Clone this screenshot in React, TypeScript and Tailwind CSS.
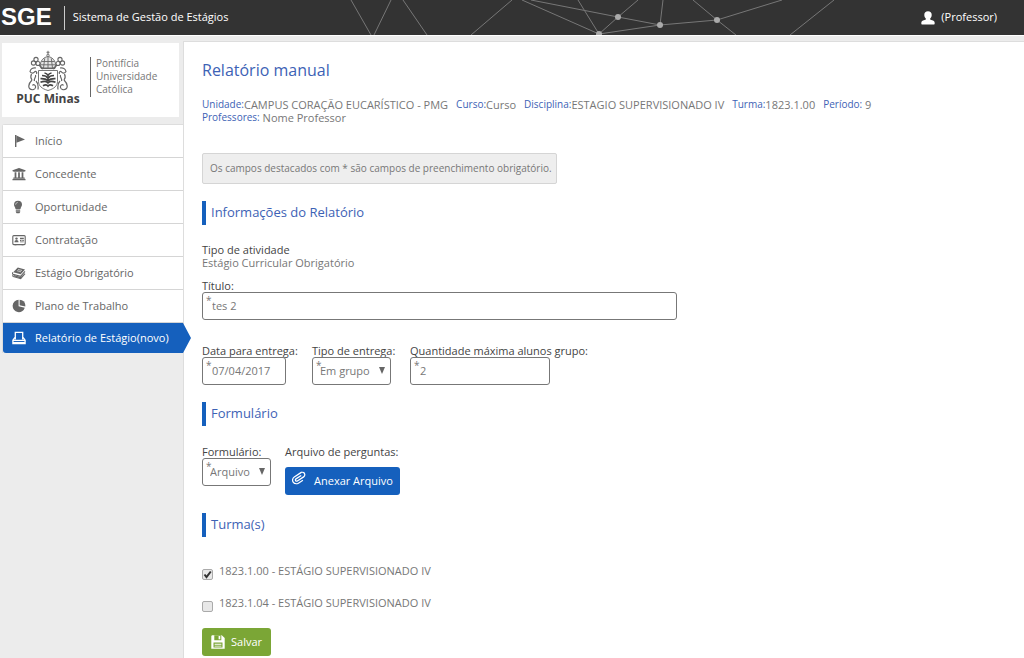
import React, { useState } from 'react';
import { FaUniversity } from 'react-icons/fa';
import { ImAttachment } from 'react-icons/im';

const FlagIcon = () => (
  <svg viewBox="0 0 14 14" className="h-3.5 w-3.5" fill="currentColor">
    <path d="M3 1h1.4v12H3z" />
    <path d="M4.4 1.4 13 5.6 4.4 8.800z" />
  </svg>
);

const BulbIcon = () => (
  <svg viewBox="0 0 14 14" className="h-3.5 w-3.5" fill="currentColor">
    <path d="M6 .8a4 4 0 0 1 4 4c0 1.700-1.300 2.400-1.500 4.200h-5C3.300 7.200 2 6.500 2 4.800a4 4 0 0 1 4-4z" />
    <path d="M3.800 9.600h4.400v1.100H3.800zM3.800 11.200h4.400v.900L7.400 13.200H4.600l-.800-1.100z" />
    <path d="M3.600 4.700C3.700 3.400 4.500 2.600 5.700 2.500" fill="none" stroke="#fff" strokeWidth=".6" />
  </svg>
);

const CardIcon = () => (
  <svg viewBox="0 0 14 14" className="h-3.5 w-3.5" fill="currentColor">
    <rect x=".8" y="2.600" width="12.400" height="9" rx="1" fill="none" stroke="currentColor" strokeWidth="1.100" />
    <circle cx="4.500" cy="5.600" r="1.200" />
    <path d="M2.500 9.200c0-1.300.8-2.200 2-2.200s2 .9 2 2.200z" />
    <path d="M8 4.800h3.800v1.500H8zM8 7h1.500v1H8zM10.300 7h1.500v1h-1.500zM8 8.600h3.800v.7H8zM2.600 11h1.800v1.200H2.600zM9.600 11h1.800v1.200H9.600z" />
  </svg>
);

const BookIcon = () => (
  <svg viewBox="0 0 14 14" className="h-3.5 w-3.5" fill="currentColor">
    <path d="M5.800 1.500 13 3.400 8.700 8.200 1.200 6.300z" />
    <path d="M1 6.400c-.700.700-.600 1.500 0 1.900l7.600 2.100L13 5.400M1.200 8.500c-.6.700-.5 1.600.1 2l7.400 2.200 4.300-5" fill="none" stroke="currentColor" strokeWidth="1.100" />
    <path d="m6 3.400 4 1.100M5 4.700l4 1.100" stroke="#fff" strokeWidth=".6" />
    <path d="M1.600 10.300 8.700 12.500l3.900-4.600-3.900 3L2 9z" />
  </svg>
);

const PieIcon = () => (
  <svg viewBox="0 0 14 14" className="h-3.5 w-3.5" fill="currentColor">
    <path d="M6.600.8V7.300l6.200 1.400A6.200 6.200 0 1 1 6.600.8z" />
    <path d="M7.600.7A6 6 0 0 1 13.300 6v1.500L7.600 6.300z" />
  </svg>
);

const ReportIcon = () => (
  <svg viewBox="0 0 14 14" className="h-3.5 w-3.5" fill="none" stroke="currentColor" strokeWidth="1.300">
    <path d="M3.300 8.500V1.300h7.400v7.200" />
    <path d="M3 6.500.9 9.200v3.500h12.200V9.200L11 6.500M1 9.300h12" />
    <path d="M1 11.600h12" />
  </svg>
);

const UserIcon = () => (
  <svg viewBox="0 0 14 14" className="h-3.5 w-3.5" fill="currentColor">
    <path d="M7 .3c2.300 0 3.700 1.300 3.700 3.500 0 1.700-.6 2.900-1.500 3.700v1c.4.500 1.700.7 2.800 1.100 1.200.5 1.700 1.200 1.700 2.700 0 .8-.3 1.200-1.100 1.200H1.400c-.8 0-1.100-.4-1.100-1.200 0-1.500.5-2.200 1.700-2.700 1.100-.4 2.400-.6 2.800-1.100v-1C3.900 6.700 3.300 5.500 3.300 3.800 3.300 1.600 4.700.3 7 .3z" />
  </svg>
);

const SaveIcon = () => (
  <svg viewBox="0 0 14 14" className="h-3.5 w-3.5">
    <path d="M1 .3h9.800L13.700 3v10.700H.3V1z" fill="#fff" />
    <path d="M3.300.3h7v4.900h-7zM2.500 7.600h9v5h-9z" fill="#7ba636" />
    <path d="M7.600 1h1.700v3.300H7.600z" fill="#fff" />
    <path d="M3.600 8.700h6.800v1H3.600zM3.600 10.700h6.800v.9H3.600z" fill="#fff" />
  </svg>
);

const Crest = () => (
  <svg viewBox="0 0 42 42" className="h-[42px] w-[42px]" fill="none" stroke="#666" strokeWidth=".9">
    <path d="M21 .8v3.800M19.500 2.300h3" />
    <circle cx="21" cy="5.300" r="1.200" />
    <path d="M14 18.500c-2-5.500 1-11 7-12 6 1 9 6.500 7 12z" fill="#e4e4e4" />
    <path d="M14.500 11.500h13M13.700 14.800h14.600M21 7v11M17.700 8.500 16.500 18M24.300 8.500 25.500 18" />
    <path d="M14 18.300h14" strokeWidth="1.600" />
    <g fill="#fff" strokeWidth="1.100">
      <circle cx="6.500" cy="13" r="2.100" /><circle cx="9" cy="9.500" r="2.100" /><circle cx="11" cy="13.500" r="2" />
      <circle cx="35.500" cy="13" r="2.100" /><circle cx="33" cy="9.500" r="2.100" /><circle cx="31" cy="13.500" r="2" />
    </g>
    <path d="m12 15 4 4M30 15l-4 4" strokeWidth="1.500" />
    <path d="M11.500 20.500h19v11c0 4-3 7.200-9.500 9-6.500-1.800-9.500-5-9.500-9z" fill="#fff" />
    <g stroke="#444" strokeWidth="1.700">
      <path d="M15 25.500c3 0 4.800.8 6 2.800 1.200-2 3-2.800 6-2.800M13.500 28.700c3.300-.2 5.800.5 7.500 2 1.700-1.500 4.200-2.200 7.500-2M13.500 32.300c3-1.200 6-1 7.500.5 1.500-1.500 4.500-1.700 7.500-.5M16 35.800c2-1.200 4-1.200 5 .2 1-1.400 3-1.400 5-.2M17.500 23c1.800.2 2.800 1 3.500 2.400.7-1.400 1.700-2.200 3.500-2.400" />
    </g>
    <g strokeWidth="1.200">
      <path d="M9 18c-3-.5-5.500 1-6 3.500 1 2 3.500 2 4.500.5s3 0 2 2M4.500 24c-1 2-1 4 .5 6M8.500 25c1 2-2 3.500-1 6M33 18c3-.5 5.500 1 6 3.500-1 2-3.500 2-4.500.5s-3 0-2 2M37.500 24c1 2 1 4-.5 6M33.500 25c-1 2 2 3.500 1 6" />
      <path d="M5 30c-3 3-4 6-2.500 8.500 2 2 5.500 1.500 6-1s-2-3.500-3-2M9 31c2 2 2.500 5 2 8.500M37 30c3 3 4 6 2.500 8.500-2 2-5.500 1.500-6-1s2-3.500 3-2M33 31c-2 2-2.500 5-2 8.500" />
    </g>
  </svg>
);

const menu = [
  { label: 'Início', icon: <FlagIcon /> },
  { label: 'Concedente', icon: <FaUniversity className="h-3.5 w-3.5" /> },
  { label: 'Oportunidade', icon: <BulbIcon /> },
  { label: 'Contratação', icon: <CardIcon /> },
  { label: 'Estágio Obrigatório', icon: <BookIcon /> },
  { label: 'Plano de Trabalho', icon: <PieIcon /> },
];

const Network = () => (
  <svg viewBox="0 0 500 35" className="absolute left-[340px] top-0 h-[35px] w-[500px]" fill="none" stroke="#777" strokeWidth="1">
    <path d="M11 0 31 35M51 0 34 35M63 0 87 35M172 0 131 35M182 0 259 34M191 0 278 17 320 25 377 20 442 0M238 0l21 34M298 0l-20 17-19 17 61-9L323 0M353 0l24 20 19 15M494 0 450 35" />
    <g fill="#aaa" stroke="none">
      <circle cx="278" cy="17" r="3" /><circle cx="320" cy="25" r="3" /><circle cx="377" cy="20" r="3" /><circle cx="259" cy="34" r="3" />
    </g>
  </svg>
);

const Star = () => <span aria-hidden="true" className="pointer-events-none absolute left-1 top-0.5 text-[10px] leading-3 text-[#777]">*</span>;

const control = 'block h-7 w-full appearance-none rounded-[3px] border border-[#777] bg-white text-[11px] text-[#777] outline-none focus:border-[#1560bd]';

function TextField({ id, label, value, width }: { id: string; label: string; value: string; width: string }) {
  return (
    <div className={width}>
      <label htmlFor={id} className="block whitespace-nowrap leading-[13px] text-[#444]">{label}</label>
      <div className="relative">
        <Star />
        <input id={id} type="text" defaultValue={value} className={control + ' px-[9px] pb-0.5'} />
      </div>
    </div>
  );
}

function SelectField({ id, label, options, width }: { id: string; label: string; options: string[]; width: string }) {
  return (
    <div className={width}>
      <label htmlFor={id} className="block whitespace-nowrap leading-[13px] text-[#444]">{label}</label>
      <div className="relative">
        <Star />
        <select id={id} className={control + ' pl-[7px] pr-4'}>
          {options.map((o) => <option key={o}>{o}</option>)}
        </select>
        <svg viewBox="0 0 6 7" className="pointer-events-none absolute right-1.5 top-2.5 h-[7px] w-1.5" fill="#666"><path d="M0 0h6L3 7z" /></svg>
      </div>
    </div>
  );
}

const Section = ({ children }: { children: React.ReactNode }) => (
  <h2 className="flex h-6 items-center border-l-4 border-[#1560bd] pl-[5px] text-[13px] text-[#3d62b5]">{children}</h2>
);

function Turma({ id, label, initial }: { id: string; label: string; initial: boolean }) {
  const [on, setOn] = useState(initial);
  return (
    <div className="flex h-4 items-start gap-[6px]">
      <span className="relative mt-1.5 h-[11px] w-[11px]">
        <input id={id} type="checkbox" checked={on} onChange={() => setOn(!on)} className="block h-[11px] w-[11px] appearance-none rounded-[2px] border border-[#aaa] bg-[#e8e8e8]" />
        {on && (
          <svg viewBox="0 0 11 11" className="pointer-events-none absolute left-0 top-0 h-[11px] w-[11px]" fill="none" stroke="#333" strokeWidth="2">
            <path d="m2.500 5.500 2 2.700L8.800 2.500" />
          </svg>
        )}
      </span>
      <label htmlFor={id} className="leading-4 text-[#777]">{label}</label>
    </div>
  );
}

const Info = ({ label, value }: { label: string; value: string }) => (
  <div className="flex whitespace-nowrap">
    <dt className="text-[10px] text-[#3d62b5]">{label}</dt>
    <dd className="whitespace-pre text-[#777]">{value}</dd>
  </div>
);

export default function App() {
  return (
    <div className="flex min-h-screen flex-col bg-[#ececec] font-['Open_Sans','Noto_Sans',sans-serif] text-[11px]">
      <header className="relative flex h-9 shrink-0 items-center overflow-hidden border-b border-white bg-[#333] text-white">
        <Network />
        <span className="pb-0.5 pl-px font-['Liberation_Sans',sans-serif] text-[24px] font-bold leading-8">SGE</span>
        <span className="ml-3 h-6 w-px bg-[#ccc]" />
        <span className="ml-2 font-medium">Sistema de Gestão de Estágios</span>
        <a href="#perfil" className="relative ml-auto mr-[27px] flex items-center gap-1.5 font-medium"><UserIcon />(Professor)</a>
      </header>
      <div className="flex flex-1">
        <aside className="w-[183px] shrink-0 pt-[7px]">
          <div className="ml-0.5 mr-1 flex h-[74px] bg-white">
            <div className="flex w-[88px] flex-col items-center pl-1 pt-[7px]">
              <Crest />
              <span className="text-xs font-bold leading-[14px] text-[#444]">PUC Minas</span>
            </div>
            <div className="mt-3.5 h-10 border-l border-[#666] pl-[5px] text-[10px] leading-[13px] text-[#777]">
              Pontifícia<br />Universidade<br />Católica
            </div>
          </div>
          <nav className="ml-0.5 mt-[7px] rounded-tl-[3px] border-l border-t border-[#ddd] text-[#666]">
            {menu.map((m) => (
              <a key={m.label} href="#menu" className="flex h-[33px] items-center gap-[9px] border-b border-[#d5d5d5] bg-white pl-[9px]">
                {m.icon}{m.label}
              </a>
            ))}
            <a href="#relatorio" aria-current="page" className="relative flex h-[30px] items-center gap-[9px] rounded-bl-[3px] bg-[#1560bd] pl-[9px] font-medium text-white">
              <ReportIcon />Relatório de Estágio(novo)
              <svg viewBox="0 0 8 30" className="absolute left-full top-0 z-10 h-[30px] w-2" fill="#1560bd"><path d="M0 0 8 15 0 30z" /></svg>
            </a>
          </nav>
        </aside>
        <main className="mt-[5px] min-w-0 flex-1 border-l border-t border-[#ddd] bg-white pb-0.5 pl-[18px] pr-4">
          <h1 className="mt-[17px] text-base leading-[22px] text-[#3d62b5]">Relatório manual</h1>
          <dl className="mt-[17px] leading-[13px]">
            <div className="flex flex-wrap gap-x-2">
              <Info label="Unidade:" value="CAMPUS CORAÇÃO EUCARÍSTICO - PMG" />
              <Info label="Curso:" value="Curso" />
              <Info label="Disciplina:" value="ESTAGIO SUPERVISIONADO IV" />
              <Info label="Turma:" value="1823.1.00" />
              <Info label="Período:" value=" 9" />
            </div>
            <Info label="Professores:" value=" Nome Professor" />
          </dl>
          <p className="mb-[17px] mt-[29px] w-fit rounded-[2px] border border-[#d5d5d5] bg-[#eee] py-[7px] pl-[7px] pr-1 text-[10px] leading-[15px] text-[#777]">
            Os campos destacados com * são campos de preenchimento obrigatório.
          </p>
          <Section>Informações do Relatório</Section>
          <div className="mt-[18px] leading-[13px]">
            <p className="text-[#444]">Tipo de atividade</p>
            <p className="text-[#777]">Estágio Curricular Obrigatório</p>
          </div>
          <div className="mt-2.5"><TextField id="titulo" label="Título:" value="tes 2" width="w-[475px]" /></div>
          <div className="mt-6 flex">
            <div className="w-[110px]"><TextField id="data" label="Data para entrega:" value="07/04/2017" width="w-[84px]" /></div>
            <div className="w-[98px]"><SelectField id="tipo" label="Tipo de entrega:" options={['Em grupo', 'Individual']} width="w-[79px]" /></div>
            <TextField id="quantidade" label="Quantidade máxima alunos grupo:" value="2" width="w-[140px]" />
          </div>
          <div className="mt-[17px]"><Section>Formulário</Section></div>
          <div className="mt-[19px] flex">
            <div className="w-[83px]"><SelectField id="formulario" label="Formulário:" options={['Arquivo', 'Online']} width="w-[69px]" /></div>
            <div>
              <p className="leading-[13px] text-[#444]">Arquivo de perguntas:</p>
              <button type="button" className="mt-[9px] flex h-7 items-center gap-2 rounded-[3px] bg-[#1560bd] px-[7px] font-medium text-white">
                <ImAttachment className="mb-1.5 h-3.5 w-3.5 rotate-12" />Anexar Arquivo
              </button>
            </div>
          </div>
          <div className="mt-[18px]"><Section>Turma(s)</Section></div>
          <div className="mt-[26px] flex flex-col gap-4">
            <Turma id="turma-00" label="1823.1.00 - ESTÁGIO SUPERVISIONADO IV" initial={true} />
            <Turma id="turma-04" label="1823.1.04 - ESTÁGIO SUPERVISIONADO IV" initial={false} />
          </div>
          <button type="submit" className="mt-[17px] flex h-7 items-center gap-[6px] rounded-[3px] bg-[#7ba636] px-[9px] font-medium text-white">
            <SaveIcon />Salvar
          </button>
        </main>
      </div>
    </div>
  );
}
